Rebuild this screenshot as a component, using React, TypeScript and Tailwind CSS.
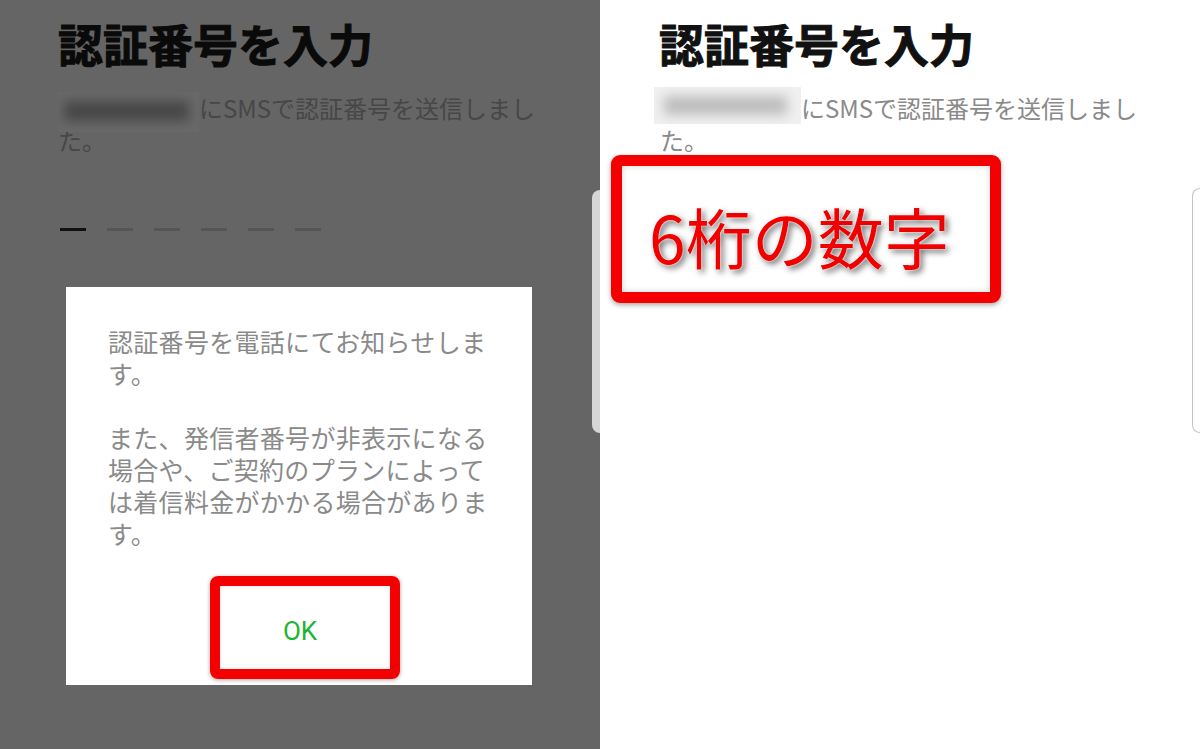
import React from "react";

const FONT = "font-['Noto_Sans_CJK_JP','Noto_Sans',sans-serif]";

function Dashes({ active, idle }: { active: string; idle: string }) {
  return (
    <div className="flex gap-[21px] pl-[60px] mt-[38px] h-[3px]">
      {[0, 1, 2, 3, 4, 5].map((i) => (
        <span key={i} className={`block w-[26px] h-[3px] ${i === 0 ? active : idle}`} />
      ))}
    </div>
  );
}

const DIALOG_LINES = [
  "認証番号を電話にてお知らせしま",
  "す。",
  "",
  "また、発信者番号が非表示になる",
  "場合や、ご契約のプランによって",
  "は着信料金がかかる場合がありま",
  "す。",
];

function LeftScreen() {
  return (
    <div className="relative flex flex-col w-[600px] h-full bg-[#656565]">
      <h1 className="pl-[58px] pt-[18px] text-[45px] leading-[52px] font-bold text-[#0a0a0a] [-webkit-text-stroke:1px_#0a0a0a]">
        認証番号を入力
      </h1>
      <div className="mt-[22px] pl-[58px] text-[24px] leading-[32px] text-[#474747]">
        <div className="flex items-center h-[32px]">
          <span className="relative -my-[4px] mt-[4px] block w-[141px] h-[40px] bg-[#696969] overflow-hidden">
            <span className="absolute left-[6px] right-[10px] top-[9px] bottom-[11px] bg-[#474747] blur-[6px]" />
          </span>
          <span>にSMSで認証番号を送信しまし</span>
        </div>
        <div>た。</div>
      </div>
      <div className="mt-[34px] flex justify-between h-[243px]">
        <Dashes active="bg-[#111111]" idle="bg-[#555555]" />
        <div className="w-[8px] h-full rounded-l-[8px] bg-[#d6d6d6]" />
      </div>

      {/* dialog over the dimmed screen */}
      <div className="absolute left-[66px] top-[287px] w-[466px] h-[398px] bg-white pl-[42px] pr-[20px] pt-[38px] flex flex-col">
        <div className="text-[25px] leading-[32px] text-[#8a8a8a] tracking-[0.3px]">
          {DIALOG_LINES.map((line, i) => (
            <div key={i} className="h-[32px]">
              {line}
            </div>
          ))}
        </div>
        <div className="mt-[27px] ml-[102px] w-[190px] h-[103px] border-[10px] border-[#f50000] rounded-[8px] shadow-[0_1px_4px_rgba(0,0,0,0.35),inset_0_0_4px_rgba(0,0,0,0.12)] flex items-center justify-center pr-[10px] pt-[7px]">
          <span className="font-['Roboto',sans-serif] text-[26px] text-[#1cb531]">OK</span>
        </div>
      </div>
    </div>
  );
}

function RightScreen() {
  return (
    <div className="relative flex flex-col w-[600px] h-full bg-white">
      <h1 className="pl-[59px] pt-[18px] text-[45px] leading-[52px] font-bold text-[#111111] [-webkit-text-stroke:1px_#111111]">
        認証番号を入力
      </h1>
      <div className="mt-[22px] pl-[54px] text-[24px] leading-[32px] text-[#8a8a8a]">
        <div className="flex items-center h-[32px]">
          <span className="relative -my-[4px] -mt-[9px] block w-[147px] h-[37px] bg-[#f0f0f0] overflow-hidden">
            <span className="absolute left-[10px] right-[14px] top-[9px] bottom-[9px] bg-[#bdbdbd] blur-[6px]" />
          </span>
          <span>にSMSで認証番号を送信しまし</span>
        </div>
        <div className="pl-[6px]">た。</div>
      </div>
      <div className="mt-[32px] flex justify-between h-[245px]">
        <Dashes active="bg-[#111111]" idle="bg-[#cccccc]" />
        <div className="w-[8px] h-full rounded-l-[10px] border border-r-0 border-[#c4c4c4] bg-white" />
      </div>

      {/* annotation */}
      <div className="absolute left-[11px] top-[155px] w-[390px] h-[148px] border-[11px] border-[#f40000] rounded-[9px] bg-white shadow-[0_2px_5px_rgba(0,0,0,0.35),inset_0_0_6px_rgba(0,0,0,0.18)] pl-[27px] pt-[36px]">
        <span className="block text-[66px] leading-[66px] text-[#f20000] [text-shadow:0_0_1px_#fff,0_0_2px_#fff,3px_3px_6px_rgba(0,0,0,0.6)]">
          6桁の数字
        </span>
      </div>
    </div>
  );
}

export default function App() {
  return (
    <div className={`flex w-[1200px] h-[749px] overflow-hidden ${FONT}`}>
      <LeftScreen />
      <RightScreen />
    </div>
  );
}
